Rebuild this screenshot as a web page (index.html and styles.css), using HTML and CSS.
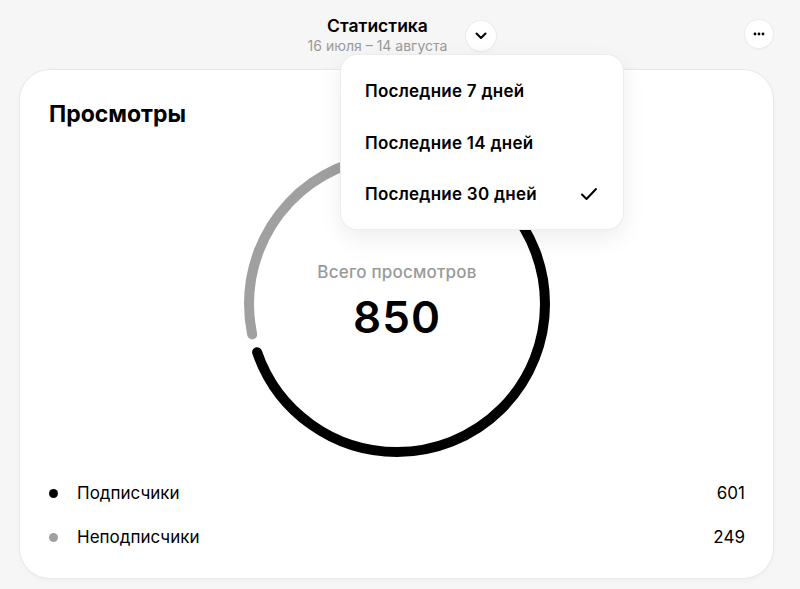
FILE: index.html
```html
<!DOCTYPE html>
<html lang="ru">
<head>
<meta charset="utf-8">
<title>Статистика</title>
<link rel="stylesheet" href="styles.css">
</head>
<body>
<div class="page">
  <header class="header">
    <div class="header-side"></div>
    <div class="header-center">
      <div class="title-block">
        <div class="title">Статистика</div>
        <div class="subtitle">16 июля – 14 августа</div>
      </div>
      <button class="round-btn chevron-btn" aria-label="Период">
        <svg width="12" height="8" viewBox="0 0 12 8"><path d="M1.5 1.5 L6 6 L10.5 1.5" fill="none" stroke="#000" stroke-width="2" stroke-linecap="round" stroke-linejoin="round"/></svg>
      </button>
    </div>
    <div class="header-side right">
      <button class="round-btn more-btn" aria-label="Ещё">
        <svg width="12" height="4" viewBox="0 0 12 4"><circle cx="2" cy="2" r="1.4" fill="#000"/><circle cx="6" cy="2" r="1.4" fill="#000"/><circle cx="10" cy="2" r="1.4" fill="#000"/></svg>
      </button>
    </div>
  </header>

  <main class="card">
    <h1 class="card-title">Просмотры</h1>
    <div class="chart">
      <svg class="ring" width="306" height="306" viewBox="0 0 306 306">
        <g transform="rotate(-90 153 153)">
          <circle cx="153" cy="153" r="148" fill="none" stroke="#000" stroke-width="10" stroke-linecap="round" stroke-dasharray="639 999" stroke-dashoffset="-9"/>
          <circle cx="153" cy="153" r="148" fill="none" stroke="#a0a0a0" stroke-width="10" stroke-linecap="round" stroke-dasharray="254 999" stroke-dashoffset="-666.5"/>
        </g>
      </svg>
      <div class="chart-label">
        <div class="chart-caption">Всего просмотров</div>
        <div class="chart-value">850</div>
      </div>
    </div>
    <ul class="legend">
      <li class="legend-row"><span class="dot dot-black"></span><span class="legend-name">Подписчики</span><span class="legend-value">601</span></li>
      <li class="legend-row"><span class="dot dot-gray"></span><span class="legend-name">Неподписчики</span><span class="legend-value">249</span></li>
    </ul>
  </main>

  <div class="menu">
    <div class="menu-item">Последние 7 дней</div>
    <div class="menu-item">Последние 14 дней</div>
    <div class="menu-item selected">Последние 30 дней
      <svg class="check" width="18" height="14" viewBox="0 0 18 14"><path d="M2 7.5 L6.5 12 L16 2" fill="none" stroke="#000" stroke-width="2" stroke-linecap="round" stroke-linejoin="round"/></svg>
    </div>
  </div>
</div>
</body>
</html>
```

FILE: styles.css
```css
* { box-sizing: border-box; }
html, body {
  margin: 0;
  padding: 0;
  background: #f6f6f6;
  font-family: Inter, "Noto Sans", sans-serif;
  color: #000;
}
.page {
  position: relative;
  width: 800px;
  height: 589px;
  overflow: hidden;
}
.header {
  height: 70px;
  padding: 16px 27px 0 20px;
  display: grid;
  grid-template-columns: 1fr auto 1fr;
  align-items: start;
}
.header-center {
  display: flex;
  align-items: center;
  gap: 19px;
  margin-left: 11px;
}
.header-side.right {
  display: flex;
  justify-content: flex-end;
  padding-top: 4px;
}
.title-block {
  display: flex;
  flex-direction: column;
  align-items: center;
}
.title {
  font-size: 17.5px;
  font-weight: 600;
  line-height: 20px;
}
.subtitle {
  margin-top: 2px;
  font-size: 14px;
  line-height: 16px;
  color: #9a9a9a;
}
.round-btn {
  padding: 0;
  border: none;
  background: #fff;
  border-radius: 50%;
  display: flex;
  align-items: center;
  justify-content: center;
  box-shadow: 0 0 0 1px #ebebeb, 0 1px 3px rgba(0,0,0,0.06);
}
.chevron-btn { width: 30px; height: 30px; margin-top: 2px; }
.more-btn { width: 28px; height: 28px; }

.card {
  margin: 0 27px 0 20px;
  height: 508px;
  background: #fff;
  border-radius: 30px;
  box-shadow: 0 0 0 1px #e9e9e9, 0 2px 6px rgba(0,0,0,0.04);
  padding: 30px 28px 19px 29px;
  display: flex;
  flex-direction: column;
}
.card-title {
  margin: 0;
  font-size: 23px;
  line-height: 28px;
  font-weight: 700;
}
.chart {
  position: relative;
  width: 306px;
  height: 306px;
  margin: 23px auto 0;
}
.ring { display: block; }
.chart-label {
  position: absolute;
  inset: 0;
  display: flex;
  flex-direction: column;
  align-items: center;
  justify-content: center;
  padding-bottom: 6px;
}
.chart-caption {
  font-size: 17px;
  line-height: 20px;
  font-weight: 500;
  color: #9a9a9a;
  letter-spacing: 0.2px;
}
.chart-value {
  margin-top: 11px;
  font-size: 44px;
  line-height: 48px;
  font-weight: 600;
  letter-spacing: 1px;
}
.legend {
  list-style: none;
  margin: 14px 0 0;
  padding: 0;
}
.legend-row {
  height: 44px;
  display: flex;
  align-items: center;
  font-size: 17px;
}
.dot {
  width: 9px;
  height: 9px;
  border-radius: 50%;
  margin-right: 19px;
}
.dot-black { background: #000; }
.dot-gray { background: #a0a0a0; }
.legend-name { flex: 1; }
.legend-value { text-align: right; }

.menu {
  position: absolute;
  left: 341px;
  top: 55px;
  width: 282px;
  height: 174px;
  background: #fff;
  border-radius: 16px;
  box-shadow: 0 0 0 1px #ececec, 0 8px 24px rgba(0,0,0,0.08);
  padding: 10px 25px 9px 24px;
  display: flex;
  flex-direction: column;
}
.menu-item {
  height: 52px;
  display: flex;
  align-items: center;
  justify-content: space-between;
  font-size: 17px;
  font-weight: 600;
  letter-spacing: 0.25px;
}
.check { display: block; }
```
